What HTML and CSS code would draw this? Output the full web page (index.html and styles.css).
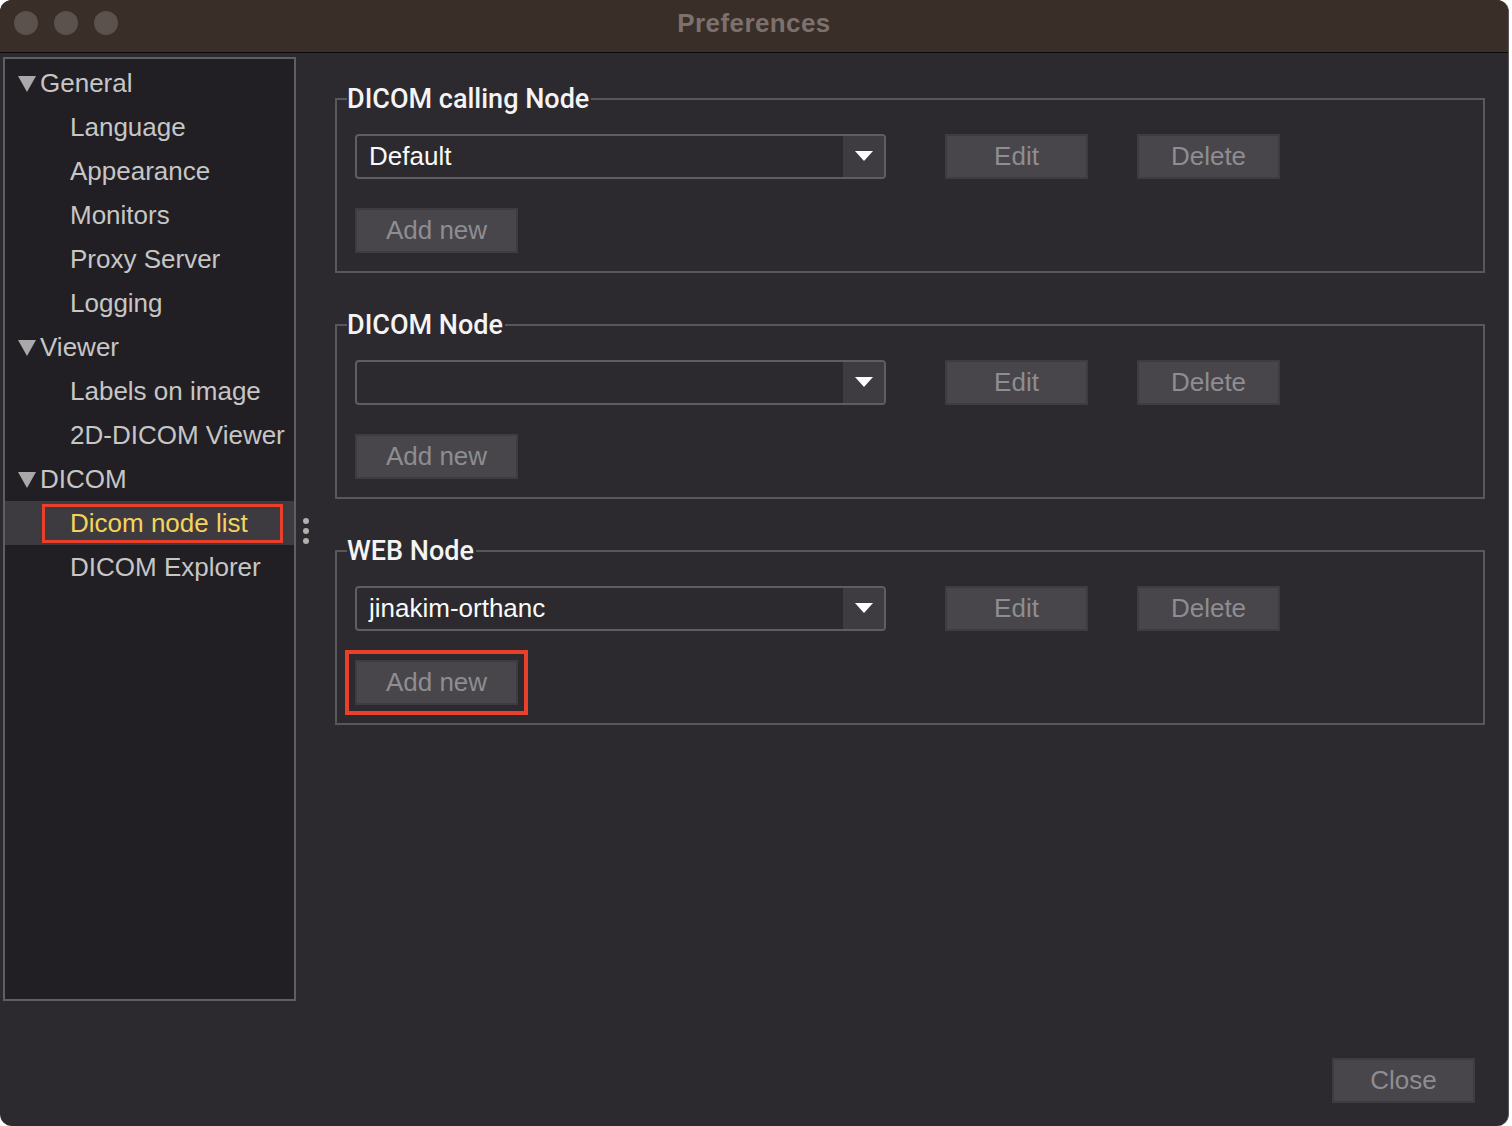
FILE: index.html
```html
<!DOCTYPE html>
<html lang="en">
<head>
    <meta charset="UTF-8">
    <title>Preferences</title>
    <link rel="stylesheet" href="styles.css">
</head>
<body>
    <div class="window">
        <div class="titlebar">
            <div class="lights">
                <span class="light"></span>
                <span class="light"></span>
                <span class="light"></span>
            </div>
            <div class="title">Preferences</div>
        </div>

        <div class="main">
            <div class="sidebar">
                <div class="tree_row parent"><svg class="arrow" width="18" height="16" viewBox="0 0 18 16"><path d="M0 0 L18 0 L9 16 Z"/></svg>General</div>
                <div class="tree_row child">Language</div>
                <div class="tree_row child">Appearance</div>
                <div class="tree_row child">Monitors</div>
                <div class="tree_row child">Proxy Server</div>
                <div class="tree_row child">Logging</div>
                <div class="tree_row parent"><svg class="arrow" width="18" height="16" viewBox="0 0 18 16"><path d="M0 0 L18 0 L9 16 Z"/></svg>Viewer</div>
                <div class="tree_row child">Labels on image</div>
                <div class="tree_row child">2D-DICOM Viewer</div>
                <div class="tree_row parent"><svg class="arrow" width="18" height="16" viewBox="0 0 18 16"><path d="M0 0 L18 0 L9 16 Z"/></svg>DICOM</div>
                <div class="tree_row child selected"><span class="mark">Dicom node list</span></div>
                <div class="tree_row child">DICOM Explorer</div>
            </div>

            <div class="splitter">
                <div class="handle">
                    <span></span><span></span><span></span>
                </div>
            </div>

            <div class="content">
                <fieldset class="group">
                    <legend>DICOM calling Node</legend>
                    <div class="row">
                        <div class="combo">
                            <span class="combo_text">Default</span>
                            <span class="combo_arrow"><svg width="18" height="11" viewBox="0 0 18 11"><path d="M0 0 L18 0 L9 10 Z" fill="#fff"/></svg></span>
                        </div>
                        <button class="btn edit">Edit</button>
                        <button class="btn">Delete</button>
                    </div>
                    <div class="row">
                        <button class="btn">Add new</button>
                    </div>
                </fieldset>

                <fieldset class="group">
                    <legend>DICOM Node</legend>
                    <div class="row">
                        <div class="combo">
                            <span class="combo_text"></span>
                            <span class="combo_arrow"><svg width="18" height="11" viewBox="0 0 18 11"><path d="M0 0 L18 0 L9 10 Z" fill="#fff"/></svg></span>
                        </div>
                        <button class="btn edit">Edit</button>
                        <button class="btn">Delete</button>
                    </div>
                    <div class="row">
                        <button class="btn">Add new</button>
                    </div>
                </fieldset>

                <fieldset class="group">
                    <legend>WEB Node</legend>
                    <div class="row">
                        <div class="combo">
                            <span class="combo_text">jinakim-orthanc</span>
                            <span class="combo_arrow"><svg width="18" height="11" viewBox="0 0 18 11"><path d="M0 0 L18 0 L9 10 Z" fill="#fff"/></svg></span>
                        </div>
                        <button class="btn edit">Edit</button>
                        <button class="btn">Delete</button>
                    </div>
                    <div class="row">
                        <button class="btn marked">Add new</button>
                    </div>
                </fieldset>
            </div>
        </div>

        <div class="footer">
            <button class="btn">Close</button>
        </div>
    </div>
</body>
</html>
```

FILE: styles.css
```css
body {
    margin: 0;
    background: #fff;
    font-family: "Liberation Sans", Arial, sans-serif;
}

.window {
    width: 1509px;
    height: 1126px;
    display: flex;
    flex-direction: column;
    background: #2c2a2e;
    border-radius: 12px;
    overflow: hidden;
    box-sizing: border-box;
    border-right: 1px solid #5a5859;
}

.titlebar {
    height: 52px;
    flex-shrink: 0;
    display: flex;
    align-items: center;
    background: #3a2e29;
    border-bottom: 1px solid #0c0a0a;
    position: relative;
}

.lights {
    display: flex;
    gap: 16px;
    padding-left: 14px;
    margin-top: -6px;
}

.light {
    width: 24px;
    height: 24px;
    border-radius: 50%;
    background: #5b514d;
}

.title {
    position: absolute;
    left: 0;
    right: 0;
    top: 8px;
    text-align: center;
    font-size: 26px;
    font-weight: bold;
    color: #7c716c;
    letter-spacing: 0.4px;
}

.main {
    height: 952px;
    flex-shrink: 0;
    display: flex;
}

.sidebar {
    width: 289px;
    margin: 4px 0 4px 3px;
    padding-top: 2px;
    background: #211f23;
    border: 2px solid #5f5e62;
}

.tree_row {
    height: 44px;
    display: flex;
    align-items: center;
    font-size: 26px;
    color: #c6c6c6;
    white-space: nowrap;
}

.tree_row.parent {
    padding-left: 13px;
}

.arrow {
    fill: #a9a9a9;
    margin: 1px 4px 0 0;
}

.tree_row.child {
    padding-left: 65px;
}

.tree_row.selected {
    background: #3d3b40;
    color: #f5d35b;
}

.mark {
    display: flex;
    align-items: center;
    height: 33px;
    margin-left: -28px;
    padding: 0 32px 0 25px;
    border: 3px solid #e8402a;
}

.splitter {
    width: 20px;
    display: flex;
    align-items: center;
    justify-content: center;
}

.handle {
    display: flex;
    flex-direction: column;
    gap: 4px;
    margin-top: 4px;
}

.handle span {
    width: 6px;
    height: 6px;
    border-radius: 50%;
    background: #b0b0b0;
}

.content {
    flex: 1;
    padding: 31px 23px 0 19px;
}

.group {
    margin: 0 0 37px;
    padding: 20px 18px 18px 18px;
    border: 2px solid #58575b;
}

.group legend {
    margin-left: -8px;
    padding: 0 2px 0 0;
    font-family: Roboto, "Liberation Sans", sans-serif;
    font-weight: 500;
    font-size: 27px;
    line-height: 30px;
    color: #f4f4f4;
}

.row {
    display: flex;
    align-items: center;
}

.row + .row {
    margin-top: 29px;
}

.combo {
    width: 531px;
    height: 45px;
    box-sizing: border-box;
    display: flex;
    border: 2px solid #5e5d62;
    border-radius: 4px;
    overflow: hidden;
}

.combo_text {
    flex: 1;
    display: flex;
    align-items: center;
    padding-left: 12px;
    font-size: 26px;
    color: #fafafa;
}

.combo_arrow {
    width: 41px;
    display: flex;
    align-items: center;
    justify-content: center;
    background: #3e3c41;
}

.btn {
    width: 143px;
    height: 45px;
    box-sizing: border-box;
    background: #48464b;
    border: 2px solid #3e3c41;
    border-radius: 0;
    font-family: "Liberation Sans", Arial, sans-serif;
    font-size: 26px;
    color: #8e8d91;
    padding: 0;
}

.row .btn + .btn {
    margin-left: 49px;
}

.btn.edit {
    margin-left: 59px;
}

.row .btn:only-child {
    width: 163px;
}

.btn.marked {
    outline: 4px solid #e8402a;
    outline-offset: 6px;
}

.footer {
    display: flex;
    justify-content: flex-end;
    padding: 53px 33px 0 0;
}
```
